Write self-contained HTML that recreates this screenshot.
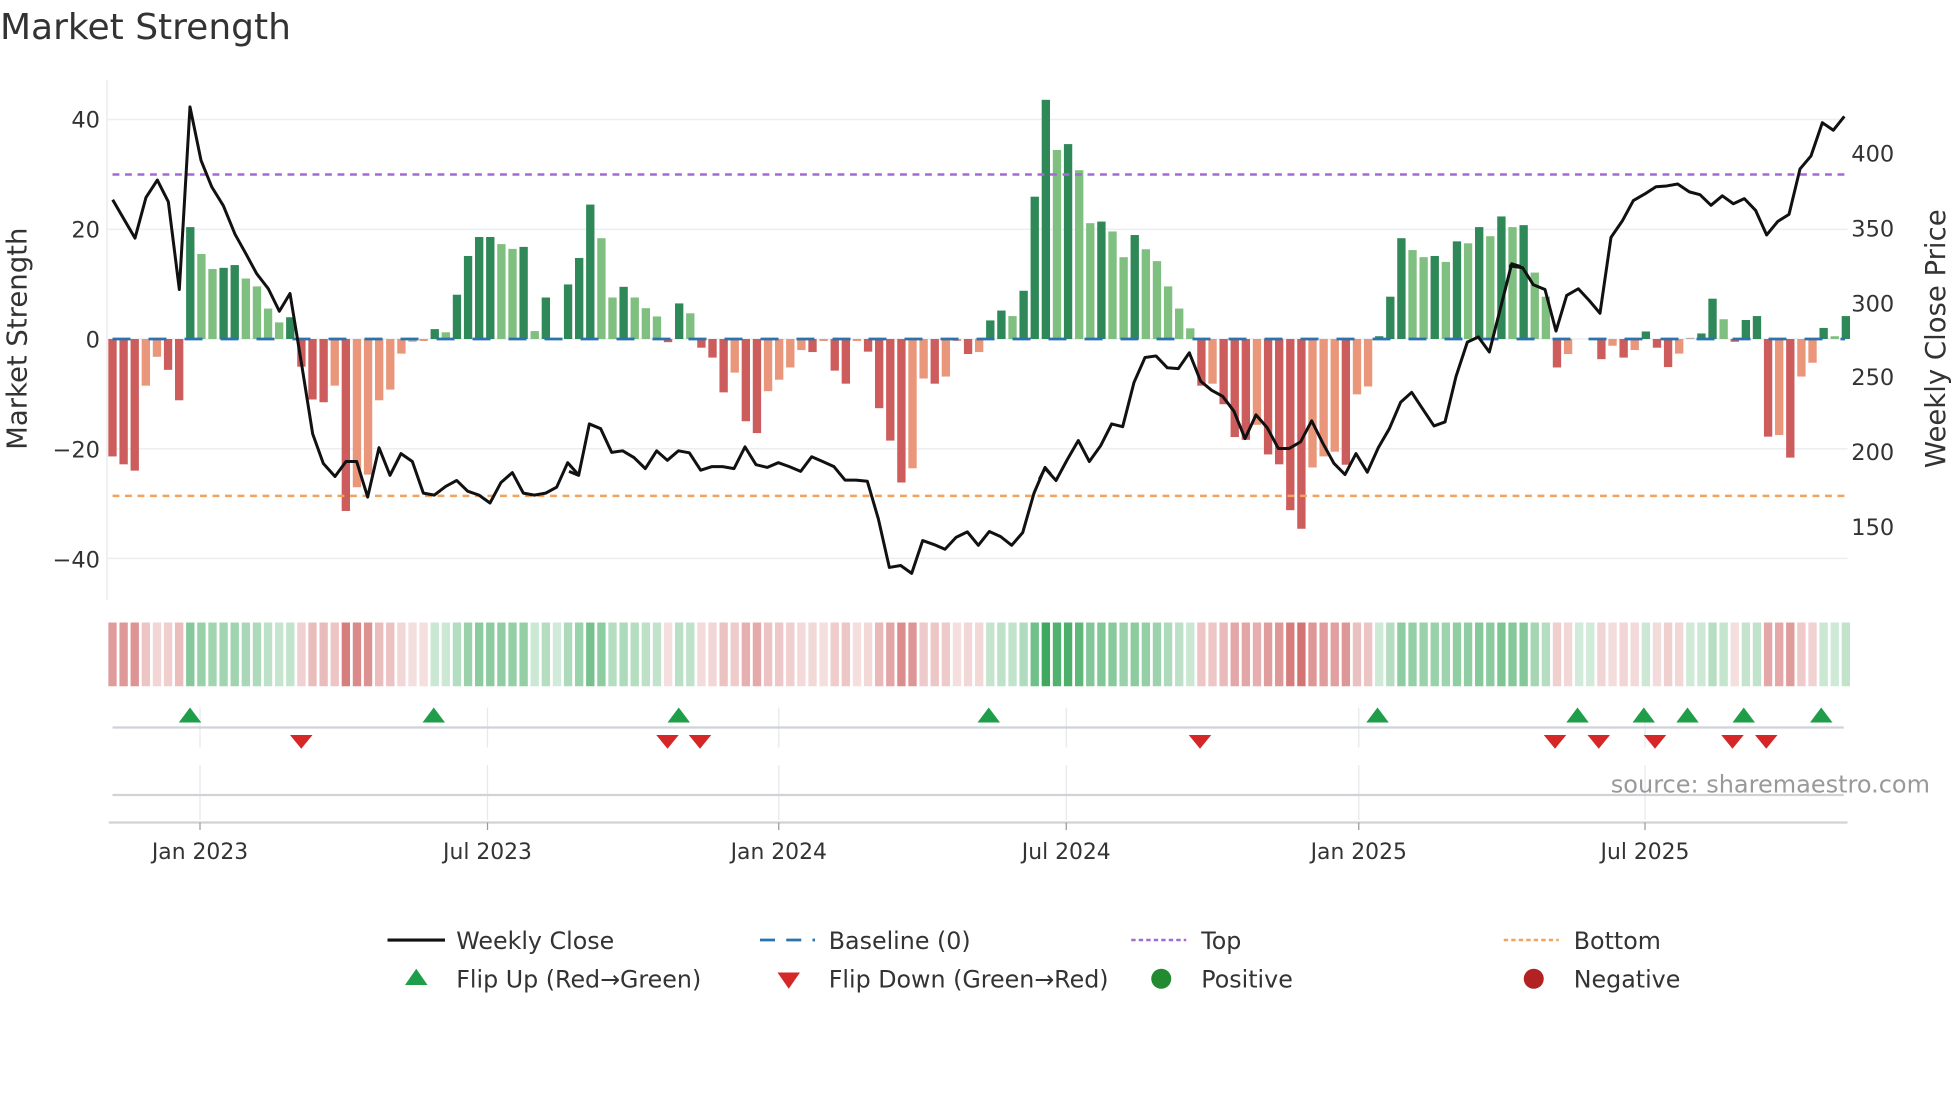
<!DOCTYPE html>
<html><head><meta charset="utf-8">
<style>
html,body{margin:0;padding:0;background:#fff;}
svg{display:block;}
text{font-family:"DejaVu Sans","Liberation Sans",sans-serif;fill:#333;}
</style></head>
<body>
<svg id="s" width="1960" height="1102" viewBox="0 0 1568 881.6" xmlns="http://www.w3.org/2000/svg">
<rect width="1568" height="882" fill="#fff"/>
<text x="0" y="31" font-size="28.8" fill="#333">Market Strength</text>

<g stroke="#eceef2" stroke-width="1.2">
<line x1="86" y1="95.6" x2="1478" y2="95.6"/>
<line x1="86" y1="183.5" x2="1478" y2="183.5"/>
<line x1="86" y1="271.2" x2="1478" y2="271.2"/>
<line x1="86" y1="359" x2="1478" y2="359"/>
<line x1="86" y1="446.7" x2="1478" y2="446.7"/>
</g>
<line x1="85.6" y1="64" x2="85.6" y2="480" stroke="#eceef2" stroke-width="1.4"/>

<g font-size="18" text-anchor="end">
<text x="80" y="102">40</text>
<text x="80" y="190">20</text>
<text x="80" y="278">0</text>
<text x="80" y="366">−20</text>
<text x="80" y="454">−40</text>
</g>
<text transform="translate(21,271) rotate(-90)" font-size="22" text-anchor="middle">Market Strength</text>
<g font-size="18">
<text x="1481" y="129">400</text>
<text x="1481" y="189">350</text>
<text x="1481" y="249">300</text>
<text x="1481" y="308">250</text>
<text x="1481" y="368">200</text>
<text x="1481" y="428">150</text>
</g>
<text transform="translate(1556,271) rotate(-90)" font-size="22" text-anchor="middle">Weekly Close Price</text>

<g id="bars" transform="translate(86.67,271.2) scale(8.889,0.31627)"></g>
<g id="strip"></g>

<line x1="90" y1="139.6" x2="1476" y2="139.6" stroke="#a36ad6" stroke-width="2" stroke-dasharray="5.5 4.5"/>
<line x1="90" y1="396.7" x2="1476" y2="396.7" stroke="#f4a35e" stroke-width="2" stroke-dasharray="5.5 4.5"/>
<line x1="90" y1="271.2" x2="1476" y2="271.2" stroke="#2b73ad" stroke-width="2.2" stroke-dasharray="14.4 14.4"/>

<g fill="none" stroke="#111" stroke-width="3" stroke-linejoin="round">
<polyline vector-effect="non-scaling-stroke" transform="translate(80,64) scale(0.26667,0.31627)" points="38,303 105,400 138,297 172,253 205,308 238,530 270,68 303,203 335,270 370,318 405,390 438,440 470,490 505,528 538,585 570,540 605,720 638,895 670,970 705,1003 738,965 770,965 803,1055 837,930 870,1000 903,945 937,965 970,1045 1003,1050 1037,1028 1070,1013 1103,1040 1137,1050 1170,1070 1203,1018 1237,993 1270,1045 1303,1050 1337,1045 1370,1030 1403,968 1437,1000"/>
<polyline vector-effect="non-scaling-stroke" transform="translate(456,64) scale(0.26667,0.31627)" points="-3,990 26,1000 58,870 92,882 125,942 158,938 192,955 226,983 260,938 292,962 325,938 358,943 392,987 425,978 458,978 492,983 525,928 558,973 592,980 625,968 658,978 692,990 725,953 758,965 792,978 825,1012 858,1012 892,1015 925,1110 958,1233 992,1228 1025,1248 1058,1165 1092,1175 1125,1187 1158,1157 1192,1143 1225,1177 1258,1142 1292,1155 1325,1177 1358,1145 1392,1045 1425,980 1442,997"/>
<polyline vector-effect="non-scaling-stroke" transform="translate(832,64) scale(0.26667,0.31627)" points="-2,1010 15,982 48,1013 82,960 115,912 148,965 182,925 215,870 248,877 282,765 315,702 348,698 382,728 415,730 448,690 482,762 515,785 548,800 582,838 615,907 648,847 682,880 715,932 748,932 782,915 815,862 848,918 882,970 915,998 948,945 982,992 1015,930 1048,882 1082,815 1115,790 1148,832 1182,875 1215,865 1248,750 1282,663 1315,650 1348,688 1382,575 1415,465 1442,472"/>
<polyline vector-effect="non-scaling-stroke" transform="translate(1208,64) scale(0.26667,0.31627)" points="-3,470 38,475 70,518 105,530 138,635 170,545 205,528 238,558 270,590 303,398 338,355 370,305 405,288 438,270 470,268 503,263 538,283 570,290 603,317 637,293 670,313 703,300 737,330 770,392 803,358 837,340 870,225 903,192 937,108 970,127 1003,92"/>
</g>

<g stroke="#e6e8ec" stroke-width="1">
<line x1="160" y1="566" x2="160" y2="598"/><line x1="160" y1="612" x2="160" y2="656"/>
<line x1="390" y1="566" x2="390" y2="598"/><line x1="390" y1="612" x2="390" y2="656"/>
<line x1="623" y1="566" x2="623" y2="598"/><line x1="623" y1="612" x2="623" y2="656"/>
<line x1="853" y1="566" x2="853" y2="598"/><line x1="853" y1="612" x2="853" y2="656"/>
<line x1="1087" y1="566" x2="1087" y2="598"/><line x1="1087" y1="612" x2="1087" y2="656"/>
<line x1="1316" y1="566" x2="1316" y2="598"/><line x1="1316" y1="612" x2="1316" y2="656"/>
</g>
<line x1="90" y1="582" x2="1475" y2="582" stroke="#d0d2d6" stroke-width="1.8"/>
<line x1="90" y1="636" x2="1475" y2="636" stroke="#d0d2d6" stroke-width="1.8"/>
<line x1="87" y1="658" x2="1478" y2="658" stroke="#d0d2d6" stroke-width="1.8"/>
<g stroke="#999" stroke-width="1">
<line x1="160" y1="658" x2="160" y2="664"/><line x1="390" y1="658" x2="390" y2="664"/><line x1="623" y1="658" x2="623" y2="664"/>
<line x1="853" y1="658" x2="853" y2="664"/><line x1="1087" y1="658" x2="1087" y2="664"/><line x1="1316" y1="658" x2="1316" y2="664"/>
</g>
<g id="mk"></g>
<g font-size="17.5" text-anchor="middle">
<text x="160" y="687">Jan 2023</text>
<text x="390" y="687">Jul 2023</text>
<text x="623" y="687">Jan 2024</text>
<text x="853" y="687">Jul 2024</text>
<text x="1087" y="687">Jan 2025</text>
<text x="1316" y="687">Jul 2025</text>
</g>
<text x="1544" y="634" font-size="19.2" text-anchor="end" style="fill:#999">source: sharemaestro.com</text>

<g font-size="19">
<line x1="310" y1="752" x2="356" y2="752" stroke="#111" stroke-width="2.5"/>
<text x="365" y="759">Weekly Close</text>
<line x1="608" y1="752" x2="652" y2="752" stroke="#2b73ad" stroke-width="2.2" stroke-dasharray="12 9"/>
<text x="663" y="759">Baseline (0)</text>
<line x1="905" y1="752" x2="949" y2="752" stroke="#a36ad6" stroke-width="2" stroke-dasharray="3.5 2.5"/>
<text x="961" y="759">Top</text>
<line x1="1203" y1="752" x2="1247" y2="752" stroke="#f4a35e" stroke-width="2" stroke-dasharray="3.5 2.5"/>
<text x="1259" y="759">Bottom</text>
<polygon points="333,775 342,788 324,788" fill="#1f9e4a"/>
<text x="365" y="790">Flip Up (Red→Green)</text>
<polygon points="622,778 640,778 631,791" fill="#d62728"/>
<text x="663" y="790">Flip Down (Green→Red)</text>
<circle cx="929" cy="783" r="8" fill="#228b32"/>
<text x="961" y="790">Positive</text>
<circle cx="1227" cy="783" r="8" fill="#b22222"/>
<text x="1259" y="790">Negative</text>
</g>
</svg>
<script>
var d="952R 972R 988R 773S 700S 733R 810R 372D 440L 478L 475D 468D 502L 522L 578L 613L 600D 725R 808R 815R 773S 1090R 1030S 998S 810S 783S 692S 662G 660S 630D 638L 543D 445D 397D 397D 415L 427L 422D 635L 550D 655N 517D 450D 315D 400L 550L 523D 550L 577L 598L 663R 565D 590L 677R 702R 790R 740S 863R 893R 787S 758S 727S 683S 688R 660S 735R 768R 660S 687R 830R 912R 1018R 982S 755S 768R 750S 660S 693R 688S 608D 583D 597L 533D 295D 50D 177L 162D 228L 362L 358D 383L 448L 392D 428L 458L 522L 578L 628L 773R 768S 820R 903R 910R 872S 947R 972R 1088R 1135R 980S 952S 940S 973R 795S 775S 648D 548D 400D 430L 448L 445D 460L 408D 413L 372D 395L 345D 372L 367D 487L 548L 727R 693S 655N 655N 706R 672S 702R 683S 636D 677R 726R 692S 652G 641D 553D 605L 662R 607D 597D 902R 898S 955R 750S 715S 627D 648L 597D".split(" ");
var col={D:"#2e8857",L:"#7fbf7f",R:"#cd5c5c",S:"#e9967a",G:"#b0b0b0",N:"none"};
var NS="http://www.w3.org/2000/svg";
var bars=document.getElementById("bars"),strip=document.getElementById("strip");
function mix(a,b,t){return "rgb("+[0,1,2].map(function(k){return Math.round(a[k]+(b[k]-a[k])*t)}).join(",")+")";}
for(var i=0;i<d.length;i++){
 var zy=parseFloat(d[i]),c=d[i].slice(-1),h=zy-655;
 if(c!="N"){var r=document.createElementNS(NS,"rect");
 r.setAttribute("x",i);r.setAttribute("width",0.75);
 r.setAttribute("y",h<0?h:0);r.setAttribute("height",Math.max(Math.abs(h),2));
 r.setAttribute("fill",col[c]);bars.appendChild(r);}
 var v=(655-zy)/13.875,t=Math.min(1,Math.abs(v)/40),fc;
 if(v>=0) fc=mix([255,255,255],[44,160,80],0.22+0.7*t); else fc=mix([255,255,255],[200,80,80],0.18+0.72*t);
 var s=document.createElementNS(NS,"rect");
 s.setAttribute("x",86.67+8.889*i);s.setAttribute("width",6.67);s.setAttribute("y",498);s.setAttribute("height",51);
 s.setAttribute("fill",fc);strip.appendChild(s);
}
var mk=document.getElementById("mk");
[152,347,543,791,1102,1262,1315,1350,1395,1457].forEach(function(x){var p=document.createElementNS(NS,"polygon");p.setAttribute("points",x+",566 "+(x+9)+",578 "+(x-9)+",578");p.setAttribute("fill","#1f9e4a");mk.appendChild(p);});
[241,534,560,960,1244,1279,1324,1386,1413].forEach(function(x){var p=document.createElementNS(NS,"polygon");p.setAttribute("points",(x-9)+",588 "+(x+9)+",588 "+x+",599");p.setAttribute("fill","#d62728");mk.appendChild(p);});
</script>
</body></html>
